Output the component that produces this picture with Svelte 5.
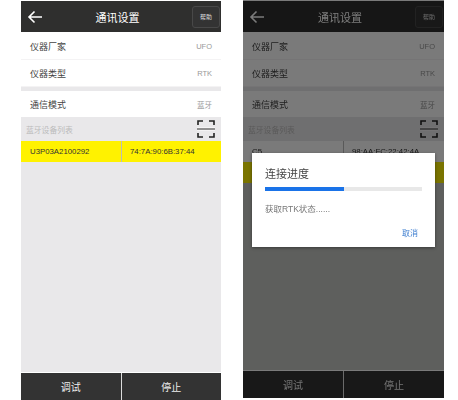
<script>
  const rows = [
    { label: '仪器厂家', value: 'UFO' },
    { label: '仪器类型', value: 'RTK' }
  ]
</script>

{#snippet settings()}
  <header class="topbar">
    <svg class="back" viewBox="0 0 16 14" width="16" height="14" aria-hidden="true">
      <path d="M15 7H2M7.5 1.5 2 7l5.5 5.5" fill="none" stroke="currentColor" stroke-width="1.6" />
    </svg>
    <h1>通讯设置</h1>
    <button class="help">帮助</button>
  </header>
  <div class="rows">
    {#each rows as row}
      <div class="row"><span>{row.label}</span><em>{row.value}</em></div>
    {/each}
  </div>
  <div class="row mode"><span>通信模式</span><em>蓝牙</em></div>
  <div class="list-head">
    <span>蓝牙设备列表</span>
    <svg class="scan" viewBox="0 0 18 18" width="18" height="18" aria-hidden="true">
      <path d="M1 5V1h5M12 1h5v4M1 13v4h5M12 17h5v-4" fill="none" stroke="currentColor" stroke-width="1.6" />
      <path d="M0 9h18" stroke="#fff" stroke-width="3" />
      <path d="M0 9h18" stroke="currentColor" stroke-width="1" />
    </svg>
  </div>
{/snippet}

{#snippet footer()}
  <footer class="actions">
    <button>调试</button>
    <button>停止</button>
  </footer>
{/snippet}

<main class="page">
  <section class="phone">
    {@render settings()}
    <div class="devices">
      <div class="device selected"><span>U3P03A2100292</span><span>74:7A:90:6B:37:44</span></div>
    </div>
    {@render footer()}
  </section>

  <section class="phone dimmed">
    {@render settings()}
    <div class="devices">
      <div class="device"><span>C5</span><span>98:AA:FC:22:42:4A</span></div>
      <div class="device selected"><span></span><span></span></div>
    </div>
    {@render footer()}
    <div class="scrim"></div>
    <div class="dialog">
      <h2>连接进度</h2>
      <div class="track"><div class="fill" style="width: 50%"></div></div>
      <p>获取RTK状态......</p>
      <button class="cancel">取消</button>
    </div>
  </section>
</main>

<style>
  :global(body) {
    background: #fff;
  }

  .page {
    display: flex;
    gap: 22px;
    height: 400px;
    padding-left: 21px;
    box-sizing: border-box;
    font-family: "Liberation Sans", "Noto Sans CJK SC", sans-serif;
    filter: blur(0.3px);
  }

  .phone {
    position: relative;
    display: flex;
    flex-direction: column;
    width: 200px;
    padding-top: 1px;
    box-sizing: border-box;
    background: #fff;
  }

  .dimmed {
    width: 201px;
    height: 398px;
  }

  .topbar {
    display: flex;
    align-items: center;
    height: 31px;
    margin-bottom: 1px;
    padding: 0 1px 0 6px;
    background: #2f2f2e;
    color: #fff;
  }

  .back {
    flex: none;
  }

  h1 {
    flex: 1;
    margin: 0;
    font-size: 11px;
    font-weight: 400;
    text-align: center;
  }

  .help {
    width: 28px;
    height: 22px;
    padding: 0;
    border: 1px solid #484848;
    border-radius: 3px;
    background: #333;
    color: #ddd;
    font: inherit;
    font-size: 6px;
  }

  .rows {
    display: flex;
    flex-direction: column;
    padding-bottom: 4px;
    background: #e9e8ea;
  }

  .row {
    display: flex;
    align-items: center;
    justify-content: space-between;
    height: 26px;
    padding: 0 9px;
    border-bottom: 1px solid #f4f3f4;
    background: #fff;
    color: #444;
    font-size: 9px;
  }

  .row em {
    color: #999;
    font-size: 7.5px;
    font-style: normal;
  }

  .mode {
    border-bottom: 0;
  }

  .list-head {
    display: flex;
    align-items: center;
    justify-content: space-between;
    height: 24px;
    padding: 0 6px 0 5px;
    background: #e9e8ea;
    color: #bbb;
    font-size: 7.8px;
  }

  .scan {
    color: #222;
  }

  .devices {
    flex: 1;
    background: #e9e8ea;
  }

  .device {
    display: grid;
    grid-template-columns: 100px 1fr;
    align-items: center;
    height: 21px;
    background: #fff;
    color: #333;
    font-size: 7.8px;
  }

  .device span {
    padding-left: 9px;
  }

  .device span + span {
    height: 100%;
    display: flex;
    align-items: center;
    padding-left: 8px;
    border-left: 1px solid #bbb;
  }

  .selected {
    background: #fff200;
  }

  .actions {
    display: grid;
    grid-template-columns: 1fr 1fr;
    gap: 1px;
    height: 27px;
    margin-top: 1px;
    background: #ddd;
  }

  .actions button {
    border: 0;
    background: #333;
    color: #eee;
    font: inherit;
    font-size: 10px;
  }

  .dimmed .devices {
    background: #c5c7c2;
  }

  .scrim {
    position: absolute;
    inset: 0;
    background: rgba(0, 0, 0, 0.52);
  }

  .dialog {
    position: absolute;
    top: 153px;
    left: 9px;
    width: 183px;
    height: 94px;
    padding: 14px 13px 0;
    box-sizing: border-box;
    background: #fff;
    box-shadow: 0 1px 3px rgba(0, 0, 0, 0.4);
    color: #444;
  }

  h2 {
    margin: 0 0 6px;
    font-size: 11px;
    font-weight: 400;
    line-height: 14px;
  }

  .track {
    height: 4px;
    background: #e8e8e8;
  }

  .fill {
    height: 100%;
    background: #1a73e8;
  }

  p {
    margin: 12px 0 0;
    color: #777;
    font-size: 8.5px;
    line-height: 12px;
  }

  .cancel {
    position: absolute;
    right: 17px;
    bottom: 9px;
    padding: 0;
    border: 0;
    background: none;
    color: #3f7fd0;
    font: inherit;
    font-size: 8px;
  }
</style>
